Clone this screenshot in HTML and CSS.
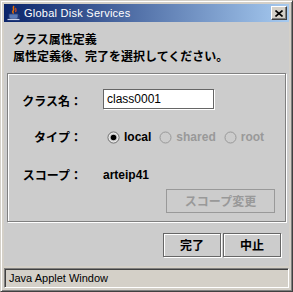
FILE: index.html
```html
<!DOCTYPE html>
<html lang="ja">
<head>
<meta charset="utf-8">
<title>Global Disk Services</title>
<link rel="stylesheet" href="styles.css">
</head>
<body>
<div class="window">
  <div class="titlebar">
    <svg class="app-icon" width="16" height="16" viewBox="0 0 16 16">
      <path d="M8 1 C6 3 9 4 7 6 C6 7 8 8 7 9" stroke="#e76f00" stroke-width="1.6" fill="none"/>
      <path d="M10 3 C9 4 11 5 9.5 7" stroke="#e05020" stroke-width="1.2" fill="none"/>
      <path d="M3 9 H12 V12 C12 13.5 10.5 14 9 14 H6 C4.5 14 3 13.5 3 12 Z" fill="#5a7ab8" stroke="#2c3f78" stroke-width="0.8"/>
      <path d="M12 10 C14.5 10 14.5 12.5 12 12.5" stroke="#2c3f78" stroke-width="1" fill="none"/>
      <path d="M1.5 14.5 H13.5" stroke="#c8d0e8" stroke-width="1.2"/>
    </svg>
    <span class="title">Global Disk Services</span>
    <div class="close">
      <svg width="8" height="7" viewBox="0 0 8 7"><path d="M0.5 0.5 L7.5 6.5 M7.5 0.5 L0.5 6.5" stroke="#000" stroke-width="1.6"/></svg>
    </div>
  </div>
  <div class="content">
    <div class="header">
      <div>クラス属性定義</div>
      <div>属性定義後、完了を選択してください。</div>
    </div>
    <div class="panel">
      <div class="form">
        <div class="label label-first">クラス名：</div>
        <div class="textfield">class0001</div>
        <div class="label">タイプ：</div>
        <div class="radios">
          <div class="radio">
            <svg width="13" height="13" viewBox="0 0 13 13"><circle cx="6.5" cy="6.5" r="5.5" fill="none" stroke="#666" stroke-width="1"/><circle cx="6.5" cy="6.5" r="4.5" fill="none" stroke="#fff" stroke-width="1" opacity="0.7"/><circle cx="6.5" cy="6.5" r="2.8" fill="#000"/></svg>
            <span class="radio-text">local</span>
          </div>
          <div class="radio disabled">
            <svg width="13" height="13" viewBox="0 0 13 13"><circle cx="6.5" cy="6.5" r="5.5" fill="none" stroke="#999" stroke-width="1"/></svg>
            <span class="radio-text">shared</span>
          </div>
          <div class="radio disabled">
            <svg width="13" height="13" viewBox="0 0 13 13"><circle cx="6.5" cy="6.5" r="5.5" fill="none" stroke="#999" stroke-width="1"/></svg>
            <span class="radio-text">root</span>
          </div>
        </div>
        <div class="label">スコープ：</div>
        <div class="value">arteip41</div>
      </div>
      <div class="panel-actions">
        <button class="btn btn-scope" disabled>スコープ変更</button>
      </div>
    </div>
    <div class="buttons">
      <button class="btn">完了</button>
      <button class="btn">中止</button>
    </div>
  </div>
  <div class="statusbar">Java Applet Window</div>
</div>
</body>
</html>
```

FILE: styles.css
```css
* { box-sizing: border-box; }
html, body {
  margin: 0;
  padding: 0;
  width: 293px;
  height: 292px;
  overflow: hidden;
  background: #d4d0c8;
}
.window {
  width: 293px;
  height: 292px;
  border: 1px solid;
  border-color: #d4d0c8 #404040 #404040 #d4d0c8;
  box-shadow: inset 1px 1px 0 #fff, inset -1px -1px 0 #808080;
  padding: 3px;
  display: flex;
  flex-direction: column;
  background: #d4d0c8;
}
.titlebar {
  height: 18px;
  flex: none;
  background: linear-gradient(to right, #0a246a, #a6caf0);
  display: flex;
  align-items: center;
}
.app-icon { margin-left: 2px; flex: none; }
.title {
  margin-left: 2px;
  color: #fff;
  font-family: "Liberation Sans", Arial, sans-serif;
  font-size: 11px;
  letter-spacing: 0.25px;
  line-height: 18px;
  flex: 1;
}
.close {
  width: 16px;
  height: 14px;
  margin-right: 2px;
  background: #d4d0c8;
  border: 1px solid;
  border-color: #fff #404040 #404040 #fff;
  box-shadow: inset -1px -1px 0 #808080;
  display: flex;
  align-items: center;
  justify-content: center;
}
.content {
  flex: 1;
  background: #cccccc;
  display: flex;
  flex-direction: column;
  font-family: "Noto Sans CJK JP", sans-serif;
}
.header {
  padding: 8px 0 0 9px;
  font-size: 12px;
  font-weight: bold;
  line-height: 17px;
  color: #000;
}
.panel {
  margin: 9px 3px 0 3px;
  height: 149px;
  border: 1px solid #808080;
  box-shadow: inset 1px 1px 0 #fff, 1px 1px 0 #fff;
  display: flex;
  flex-direction: column;
}
.form {
  margin-top: 15px;
  display: grid;
  grid-template-columns: 74px 1fr;
  grid-template-rows: 20px 20px 20px;
  column-gap: 21px;
  row-gap: 18px;
  align-items: center;
}
.label {
  text-align: right;
  font-size: 12px;
  font-weight: bold;
  line-height: 14px;
  color: #000;
}
.label-first { margin-top: 4px; }
.textfield {
  width: 111px;
  height: 20px;
  background: #fff;
  border: 1px solid #666;
  box-shadow: 1px 1px 0 #fff;
  padding-left: 3px;
  font-family: "Liberation Sans", Arial, sans-serif;
  font-size: 12px;
  line-height: 18px;
  color: #000;
}
.radios {
  display: flex;
  align-items: center;
  gap: 8px;
  padding-left: 4px;
}
.radio {
  display: flex;
  align-items: center;
  gap: 4px;
}
.radio svg { flex: none; }
.radio-text, .value {
  font-family: "Liberation Sans", Arial, sans-serif;
  font-size: 12px;
  font-weight: bold;
  color: #000;
}
.radio.disabled .radio-text { color: #999; }
.panel-actions {
  display: flex;
  justify-content: flex-end;
  margin-top: 4px;
  padding-right: 10px;
}
.btn {
  margin: 0;
  padding: 0;
  height: 24px;
  width: 58px;
  background: #cccccc;
  border: 1px solid #666;
  box-shadow: inset 1px 1px 0 #fff, 1px 1px 0 #fff;
  font-family: "Noto Sans CJK JP", sans-serif;
  font-size: 12px;
  font-weight: bold;
  color: #000;
  line-height: 20px;
}
.btn-scope {
  width: 109px;
  border-color: #999;
  box-shadow: none;
  color: #999;
}
.buttons {
  display: flex;
  justify-content: flex-end;
  gap: 2px;
  margin-top: 11px;
  padding-right: 8px;
}
.statusbar {
  flex: none;
  height: 20px;
  margin-top: 2px;
  border-top: 1px solid #808080;
  border-left: 1px solid #808080;
  border-right: 1px solid #fff;
  border-bottom: 1px solid #fff;
  box-shadow: inset 1px 1px 0 #404040;
  padding-left: 4px;
  font-family: "Liberation Sans", Arial, sans-serif;
  font-size: 11px;
  line-height: 18px;
  color: #000;
}
```
